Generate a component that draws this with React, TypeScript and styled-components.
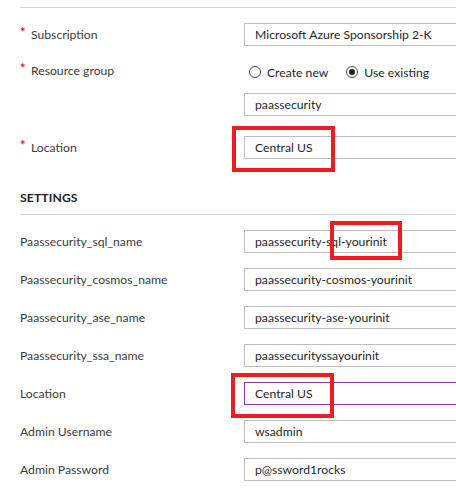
import React from "react";
import styled, { createGlobalStyle } from "styled-components";

const Global = createGlobalStyle`
  html, body { margin: 0; padding: 0; background: #ffffff; overflow: hidden; }
  body { font-family: Lato, "Open Sans", sans-serif; font-size: 12.2px; color: #333; }
`;

const Page = styled.div`
  width: 456px;
  height: 494px;
  padding-left: 20px;
  box-sizing: border-box;
  display: flex;
  flex-direction: column;
  overflow: hidden;
`;

const Divider = styled.div<{ $top: number }>`
  margin-top: ${(p) => p.$top}px;
  height: 1px;
  background: #d4d4d4;
  margin-right: -20px;
`;

const Row = styled.div<{ $top: number }>`
  margin-top: ${(p) => p.$top}px;
  display: grid;
  grid-template-columns: 224px 1fr;
  align-items: center;
`;

const Label = styled.div<{ $raise?: number }>`
  color: #3b3b3b;
  line-height: 23px;
  white-space: nowrap;
  margin-top: ${(p) => (p.$raise ? -p.$raise : 0)}px;
  align-self: ${(p) => (p.$raise ? "start" : "center")};
`;

const Star = styled.span`
  color: #e81123;
  display: inline-block;
  width: 11px;
  font-weight: 700;
  font-size: 13px;
  position: relative;
  top: -2px;
`;

const FieldCol = styled.div`
  display: flex;
  flex-direction: column;
  gap: 10px;
`;

const FieldWrap = styled.div`
  position: relative;
`;

const Input = styled.div<{ $focus?: boolean }>`
  height: 23px;
  width: 260px;
  box-sizing: border-box;
  border: 1px solid ${(p) => (p.$focus ? "#8a3aaa" : "#bdbdbd")};
  padding-left: 10px;
  display: flex;
  align-items: center;
  color: #1f1f2b;
  white-space: nowrap;
`;

const Highlight = styled.div<{ $l: number; $t: number; $w: number; $h: number }>`
  position: absolute;
  left: ${(p) => p.$l}px;
  top: ${(p) => p.$t}px;
  width: ${(p) => p.$w}px;
  height: ${(p) => p.$h}px;
  border: 4px solid #ec1c24;
  box-sizing: border-box;
  pointer-events: none;
`;

const RadioRow = styled.div`
  display: flex;
  align-items: center;
  height: 22px;
  padding-left: 5px;
`;

const RadioOpt = styled.label`
  display: flex;
  align-items: center;
  gap: 6px;
  color: #1f1f2b;
  margin-right: 18px;
`;

const Circle = styled.span<{ $on?: boolean }>`
  width: 12px;
  height: 12px;
  border-radius: 50%;
  border: 1px solid #444;
  box-sizing: border-box;
  display: inline-flex;
  align-items: center;
  justify-content: center;
  &::after {
    content: "";
    display: ${(p) => (p.$on ? "block" : "none")};
    width: 6px;
    height: 6px;
    border-radius: 50%;
    background: #222;
  }
`;

const SectionTitle = styled.div`
  margin-top: 29px;
  font-weight: 700;
  color: #222;
  line-height: 20px;
  letter-spacing: 0.1px;
`;

type Setting = { label: string; value: string; focus?: boolean; box?: [number, number, number, number] };

const settings: Setting[] = [
  { label: "Paassecurity_sql_name", value: "paassecurity-sql-yourinit", box: [86, -9, 72, 39] },
  { label: "Paassecurity_cosmos_name", value: "paassecurity-cosmos-yourinit" },
  { label: "Paassecurity_ase_name", value: "paassecurity-ase-yourinit" },
  { label: "Paassecurity_ssa_name", value: "paassecurityssayourinit" },
  { label: "Location", value: "Central US", focus: true, box: [-13, -9, 103, 45] },
  { label: "Admin Username", value: "wsadmin" },
  { label: "Admin Password", value: "p@ssword1rocks" },
];

export default function App() {
  return (
    <>
      <Global />
      <Page>
        <Divider $top={7} />
        <Row $top={15}>
          <Label>
            <Star>*</Star>Subscription
          </Label>
          <FieldWrap>
            <Input>Microsoft Azure Sponsorship 2-K</Input>
          </FieldWrap>
        </Row>
        <Row $top={15}>
          <Label $raise={2}>
            <Star>*</Star>Resource group
          </Label>
          <FieldCol>
            <RadioRow>
              <RadioOpt>
                <Circle />
                Create new
              </RadioOpt>
              <RadioOpt>
                <Circle $on />
                Use existing
              </RadioOpt>
            </RadioRow>
            <Input>paassecurity</Input>
          </FieldCol>
        </Row>
        <Row $top={20}>
          <Label>
            <Star>*</Star>Location
          </Label>
          <FieldWrap>
            <Input>Central US</Input>
            <Highlight $l={-12} $t={-10} $w={103} $h={46} />
          </FieldWrap>
        </Row>
        <SectionTitle>SETTINGS</SectionTitle>
        <Divider $top={6} />
        {settings.map((s, i) => (
          <Row key={s.label + i} $top={15}>
            <Label>{s.label}</Label>
            <FieldWrap>
              <Input $focus={s.focus}>{s.value}</Input>
              {s.box && <Highlight $l={s.box[0]} $t={s.box[1]} $w={s.box[2]} $h={s.box[3]} />}
            </FieldWrap>
          </Row>
        ))}
      </Page>
    </>
  );
}
